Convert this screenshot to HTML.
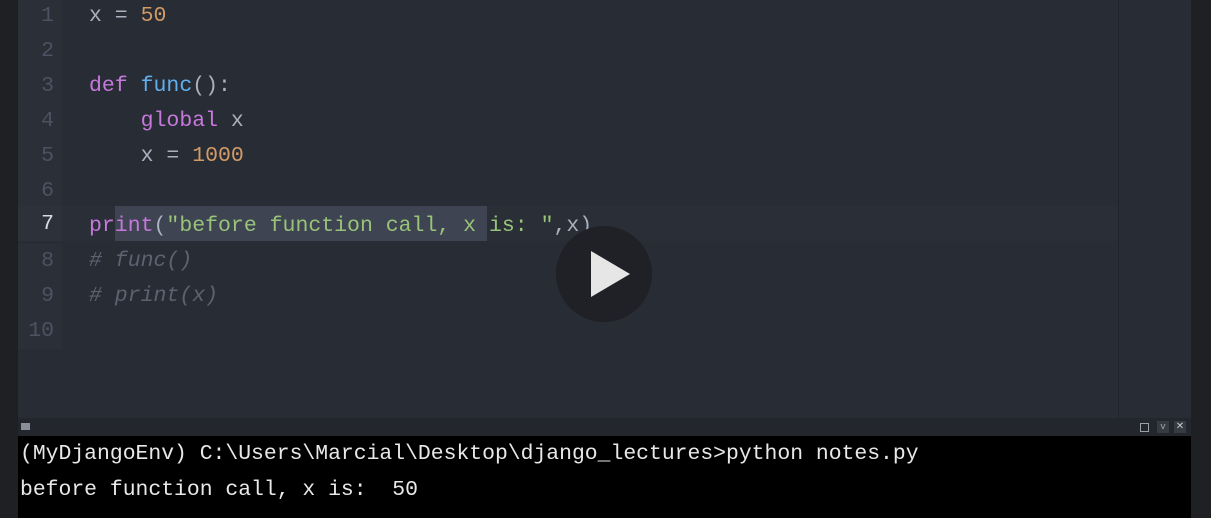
<!DOCTYPE html><html><head><style>
body{margin:0;width:1211px;height:518px;overflow:hidden;background:#282c34;position:relative;font-family:"Liberation Mono",monospace}
.a{position:absolute}
.ln{position:absolute;left:18px;width:44px;text-align:right;padding-right:0;color:#4b5263;font-size:21.5px;line-height:35px;height:35px;background:#2b2f37}
.ln span{position:absolute;right:8px}
.cd{position:absolute;left:89px;font-size:21.5px;line-height:35px;color:#abb2bf;white-space:pre}
.k{color:#c678dd}.f{color:#61afef}.n{color:#d19a66}.s{color:#98c379}.c{color:#5c6370;font-style:italic}
</style></head><body>
<div class="a" style="left:0;top:0;width:18px;height:518px;background:#1f2023"></div>
<div class="a" style="left:1191px;top:0;width:20px;height:518px;background:#1f2023"></div>
<div class="a" style="left:1118px;top:0;width:1px;height:418px;background:#21252b"></div>
<div class="a" style="left:18px;top:206px;width:1100px;height:35px;background:#2a2e36"></div>
<div class="a" style="left:115px;top:206px;width:372px;height:35px;background:#3e4451"></div>
<div class="ln" style="top:-1px"><span>1</span></div>
<div class="ln" style="top:34px"><span>2</span></div>
<div class="ln" style="top:69px"><span>3</span></div>
<div class="ln" style="top:104px"><span>4</span></div>
<div class="ln" style="top:139px"><span>5</span></div>
<div class="ln" style="top:174px"><span>6</span></div>
<div class="ln" style="top:206px;color:#d7dae0;background:#2c313a;line-height:37px"><span>7</span></div>
<div class="ln" style="top:244px"><span>8</span></div>
<div class="ln" style="top:279px"><span>9</span></div>
<div class="ln" style="top:314px"><span>10</span></div>
<div class="cd" style="top:-1px">x = <span class="n">50</span></div>
<div class="cd" style="top:69px"><span class="k">def</span> <span class="f">func</span>():</div>
<div class="cd" style="top:104px">    <span class="k">global</span> x</div>
<div class="cd" style="top:139px">    x = <span class="n">1000</span></div>
<div class="cd" style="top:209px"><span class="k">print</span>(<span class="s">"before function call, x is: "</span>,x)</div>
<div class="cd c" style="top:244px"># func()</div>
<div class="cd c" style="top:279px"># print(x)</div>
<div class="a" style="left:556px;top:226px;width:96px;height:96px;border-radius:50%;background:#1f2126"></div>
<svg class="a" style="left:556px;top:226px" width="96" height="96"><polygon points="35,25 35,71 74,48" fill="#e6e6e6"/></svg>
<div class="a" style="left:18px;top:418px;width:1173px;height:18px;background:#23262c"></div>
<div class="a" style="left:21px;top:423px;width:9px;height:7px;background:#8a8f98"></div>
<div class="a" style="left:1140px;top:423px;width:9px;height:9px;border:1px solid #9aa0a8;box-sizing:border-box"></div>
<div class="a" style="left:1157px;top:421px;width:12px;height:12px;background:#353a43;color:#aaa;font-size:9px;text-align:center;line-height:12px">v</div>
<div class="a" style="left:1174px;top:421px;width:12px;height:12px;background:#353a43;color:#ccc;font-size:10px;text-align:center;line-height:12px;font-family:'Liberation Sans'">✕</div>
<div class="a" style="left:18px;top:436px;width:1173px;height:82px;background:#000"></div>
<div class="a" style="left:20px;top:436px;color:#e8e8e8;font-size:21.4px;line-height:36px;white-space:pre">(MyDjangoEnv) C:\Users\Marcial\Desktop\django_lectures>python notes.py
before function call, x is:  50</div>
</body></html>
